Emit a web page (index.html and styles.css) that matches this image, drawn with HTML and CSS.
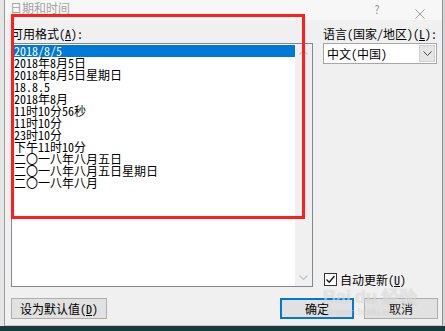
FILE: index.html
```html
<!DOCTYPE html>
<html>
<head>
    <title>日期和时间</title>
    <link rel="stylesheet" href="styles.css">
</head>
<body>
    <div class="screen">
        <div class="desk">
            <div class="edge-left"></div>

            <div class="dialog">
                <div class="titlebar">
                    <span class="title">日期和时间</span>
                    <span class="help">?</span>
                    <span class="close">
                        <svg width="10" height="10" viewBox="0 0 10 10"><path d="M0.5 0.5 L9.5 9.5 M9.5 0.5 L0.5 9.5" stroke="#9a9a9a" stroke-width="1"/></svg>
                    </span>
                </div>

                <div class="content">
                    <div class="main">
                        <div class="formats">
                            <div class="label">可用格式(<u>A</u>):</div>
                            <div class="listbox">
                                <ul class="items">
                                    <li class="selected">2018/8/5</li>
                                    <li>2018年8月5日</li>
                                    <li>2018年8月5日星期日</li>
                                    <li>18.8.5</li>
                                    <li>2018年8月</li>
                                    <li>11时10分56秒</li>
                                    <li>11时10分</li>
                                    <li>23时10分</li>
                                    <li>下午11时10分</li>
                                    <li>二〇一八年八月五日</li>
                                    <li>二〇一八年八月五日星期日</li>
                                    <li>二〇一八年八月</li>
                                </ul>
                                <div class="scrollbar">
                                    <span class="arrow">
                                        <svg width="9" height="5" viewBox="0 0 9 5"><path d="M0.5 4.5 L4.5 0.5 L8.5 4.5" fill="none" stroke="#c4c4c4" stroke-width="1.2"/></svg>
                                    </span>
                                    <span class="arrow">
                                        <svg width="9" height="5" viewBox="0 0 9 5"><path d="M0.5 0.5 L4.5 4.5 L8.5 0.5" fill="none" stroke="#c4c4c4" stroke-width="1.2"/></svg>
                                    </span>
                                </div>
                            </div>
                        </div>

                        <div class="side">
                            <div class="label">语言(国家/地区)(<u>L</u>):</div>
                            <div class="combo">
                                <span class="combo-text">中文(中国)</span>
                                <span class="drop">
                                    <svg width="9" height="5" viewBox="0 0 9 5"><path d="M0.5 0.5 L4.5 4.5 L8.5 0.5" fill="none" stroke="#444" stroke-width="1"/></svg>
                                </span>
                            </div>
                            <div class="check">
                                <span class="box">
                                    <svg width="11" height="11" viewBox="0 0 11 11"><path d="M1.5 5.5 L4.2 8.2 L9.5 2" fill="none" stroke="#111" stroke-width="1.3"/></svg>
                                </span>
                                <span>自动更新(<u>U</u>)</span>
                            </div>
                        </div>
                    </div>

                    <div class="buttons">
                        <button class="btn wide">设为默认值(<u>D</u>)</button>
                        <button class="btn primary">确定</button>
                        <button class="btn">取消</button>
                    </div>
                </div>

                <!-- annotation drawn over the screenshot -->
                <div class="marker"></div>

                <div class="watermark">
                    <div class="wm-big">Bai<span class="wm-du">du</span> 经验</div>
                    <div class="wm-small">jingyan.baidu.com</div>
                </div>
            </div>

            <div class="edge-right"></div>
        </div>
        <div class="taskbar"></div>
    </div>
</body>
</html>
```

FILE: styles.css
```css
body {
    margin: 0;
    font-family: "Noto Sans Mono CJK SC", "Noto Sans CJK SC", "Noto Sans", sans-serif;
    font-size: 12px;
    color: #000;
}
.screen {
    width: 445px;
    height: 331px;
    display: flex;
    flex-direction: column;
    overflow: hidden;
}
.desk {
    height: 326px;
    display: flex;
}
.edge-left {
    width: 4px;
    background: #e6e6e6;
}
.edge-right {
    flex: 1;
    background: #d4d4d4;
}
.taskbar {
    flex: 1;
    background: #163b3d;
}
.dialog {
    position: relative;
    width: 437px;
    background: #f0f0f0;
    border-left: 1px solid #9a9a9a;
    border-right: 1px solid #8e8e8e;
    border-bottom: 1px solid #c8c8c8;
    display: flex;
    flex-direction: column;
}
.titlebar {
    height: 20px;
    background: #f7f7f7;
    display: flex;
    align-items: flex-start;
    padding-left: 5px;
}
.title {
    color: #a3a3a3;
    line-height: 14px;
    margin-top: 1px;
}
.help {
    margin-left: auto;
    margin-right: 35px;
    color: #9a9a9a;
    line-height: 12px;
    margin-top: 3px;
}
.close {
    margin-top: 5px;
    margin-right: 17px;
    height: 10px;
}
.content {
    padding: 6px 4px 0 6px;
}
.main {
    display: flex;
    gap: 10px;
}
.formats {
    width: 302px;
}
.label {
    line-height: 16px;
    height: 16px;
    margin-bottom: 1px;
    white-space: nowrap;
}
.listbox {
    height: 244px;
    box-sizing: border-box;
    border: 1px solid #828790;
    background: #fff;
    display: flex;
}
.items {
    list-style: none;
    margin: 0;
    padding: 1px 0 0 1px;
    flex: 1;
}
.items li {
    line-height: 12px;
    height: 12px;
    padding-left: 1px;
    white-space: nowrap;
}
.items li.selected {
    background: #0078d7;
    color: #fff;
}
.scrollbar {
    width: 17px;
    background: #f0f0f0;
    display: flex;
    flex-direction: column;
    justify-content: space-between;
}
.arrow {
    height: 17px;
    display: flex;
    align-items: center;
    justify-content: center;
}
.side {
    width: 114px;
    display: flex;
    flex-direction: column;
}
.combo {
    height: 21px;
    box-sizing: border-box;
    border: 1px solid #a6a6a6;
    background: #fff;
    display: flex;
    align-items: center;
}
.combo-text {
    flex: 1;
    padding-left: 3px;
}
.drop {
    width: 16px;
    height: 17px;
    margin-right: 1px;
    box-sizing: border-box;
    border: 1px solid #cfcfcf;
    background: #e5e5e5;
    display: flex;
    align-items: center;
    justify-content: center;
}
.check {
    margin-top: auto;
    height: 15px;
    display: flex;
    align-items: center;
    gap: 3px;
    padding-left: 1px;
    white-space: nowrap;
}
.box {
    width: 13px;
    height: 13px;
    box-sizing: border-box;
    border: 1px solid #333;
    background: #fff;
    display: flex;
    align-items: center;
    justify-content: center;
}
.buttons {
    display: flex;
    margin-top: 11px;
    gap: 10px;
}
.btn {
    height: 21px;
    width: 74px;
    box-sizing: border-box;
    border: 1px solid #adadad;
    background: #e1e1e1;
    font-family: inherit;
    font-size: 12px;
    color: #000;
    padding: 0;
    line-height: 18px;
}
.btn.wide {
    width: 96px;
}
.btn.primary {
    margin-left: auto;
    border: 2px solid #0078d7;
}
.marker {
    position: absolute;
    left: 6px;
    top: 14px;
    width: 294px;
    height: 205px;
    box-sizing: border-box;
    border: 3px solid #ff1d1d;
}
.watermark {
    position: absolute;
    left: 318px;
    top: 287px;
    color: rgba(255, 255, 255, 0.55);
    text-shadow: 0 0 1px rgba(0, 0, 0, 0.2);
    pointer-events: none;
}
.wm-big {
    font-family: "Liberation Sans", sans-serif;
    font-weight: bold;
    font-size: 18px;
    line-height: 20px;
}
.wm-du {
    margin-left: 4px;
}
.wm-small {
    font-family: "Liberation Sans", sans-serif;
    font-size: 9px;
    line-height: 10px;
    padding-left: 4px;
}
```
